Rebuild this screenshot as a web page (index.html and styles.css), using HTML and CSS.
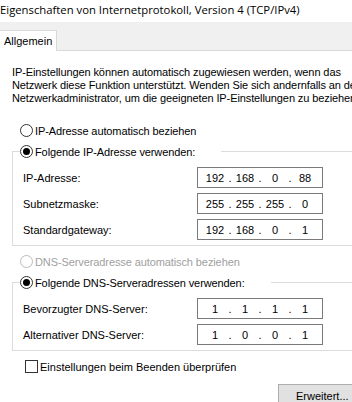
FILE: index.html
```html
<!DOCTYPE html>
<html lang="de">
<head>
  <meta charset="UTF-8" />
  <title>Eigenschaften von Internetprotokoll, Version 4 (TCP/IPv4)</title>
  <link rel="stylesheet" href="styles.css">
</head>
<body>
  <div class="titel">Eigenschaften von Internetprotokoll, Version 4 (TCP/IPv4)</div>

  <div class="reiter">
    <div class="reiter-aktiv">Allgemein</div>
  </div>

  <main class="seite">
    <p class="hinweis">
      IP-Einstellungen können automatisch zugewiesen werden, wenn das<br>
      Netzwerk diese Funktion unterstützt. Wenden Sie sich andernfalls an den<br>
      Netzwerkadministrator, um die geeigneten IP-Einstellungen zu beziehen.
    </p>

    <!-- IP-Adresse -->
    <label class="option"><input type="radio" name="ip" /> IP-Adresse automatisch beziehen</label>
    <fieldset class="gruppe">
      <legend><label class="option"><input type="radio" name="ip" checked /> Folgende IP-Adresse verwenden:</label></legend>
      <div class="zeile">
        <span>IP-Adresse:</span>
        <div class="ipfeld"><span>192</span><i>.</i><span>168</span><i>.</i><span>0</span><i>.</i><span>88</span></div>
      </div>
      <div class="zeile">
        <span>Subnetzmaske:</span>
        <div class="ipfeld"><span>255</span><i>.</i><span>255</span><i>.</i><span>255</span><i>.</i><span>0</span></div>
      </div>
      <div class="zeile">
        <span>Standardgateway:</span>
        <div class="ipfeld"><span>192</span><i>.</i><span>168</span><i>.</i><span>0</span><i>.</i><span>1</span></div>
      </div>
    </fieldset>

    <!-- DNS -->
    <label class="option inaktiv"><input type="radio" name="dns" disabled /> DNS-Serveradresse automatisch beziehen</label>
    <fieldset class="gruppe">
      <legend><label class="option"><input type="radio" name="dns" checked /> Folgende DNS-Serveradressen verwenden:</label></legend>
      <div class="zeile">
        <span>Bevorzugter DNS-Server:</span>
        <div class="ipfeld"><span>1</span><i>.</i><span>1</span><i>.</i><span>1</span><i>.</i><span>1</span></div>
      </div>
      <div class="zeile">
        <span>Alternativer DNS-Server:</span>
        <div class="ipfeld"><span>1</span><i>.</i><span>0</span><i>.</i><span>0</span><i>.</i><span>1</span></div>
      </div>
    </fieldset>

    <label class="pruefen"><input type="checkbox" /> Einstellungen beim Beenden überprüfen</label>

    <div class="aktionen">
      <button type="button">Erweitert...</button>
    </div>
  </main>
</body>
</html>
```

FILE: styles.css
```css
body {
  font-family: 'Liberation Sans', Arial, sans-serif;
  font-size: 11px;
  color: #000;
  background-color: #fff;
  margin: 0;
  width: 352px;
  height: 402px;
  overflow: hidden;
}
.titel {
  height: 22px;
  line-height: 20px;
  font-family: 'Open Sans', 'Noto Sans', sans-serif;
  font-size: 11.3px;
  white-space: nowrap;
}
.reiter {
  height: 28px;
  background-color: #f0f0f0;
  border-bottom: 1px solid #d9d9d9;
  display: flex;
  align-items: flex-end;
}
.reiter-aktiv {
  width: 52px;
  height: 20px;
  line-height: 20px;
  padding-left: 4px;
  background: #fff;
  border-top: 1px solid #d9d9d9;
  border-right: 1px solid #d9d9d9;
  margin-bottom: -1px;
}
.seite {
  padding-left: 12px;
  white-space: nowrap;
}
.hinweis {
  margin: 15px 0 0;
  line-height: 13px;
  letter-spacing: -0.1px;
}

/* Optionsfelder */
.option {
  display: flex;
  align-items: center;
  gap: 2px;
  height: 21px;
  padding-left: 8px;
  letter-spacing: -0.1px;
}
.hinweis + .option {
  margin-top: 15px;
}
.option.inaktiv {
  color: #a0a0a0;
  margin-top: 5px;
}
legend .option {
  padding-left: 0;
  padding-right: 26px;
}
input[type="radio"] {
  appearance: none;
  margin: 0;
  width: 13px;
  height: 13px;
  border: 1px solid #333;
  border-radius: 50%;
  box-sizing: border-box;
  display: grid;
  place-content: center;
  background: #fff;
}
input[type="radio"]:checked::before {
  content: '';
  width: 7px;
  height: 7px;
  border-radius: 50%;
  background: #000;
}
input[type="radio"]:disabled {
  border-color: #bcbcbc;
}

/* Gruppenrahmen */
.gruppe {
  margin: 0 -20px 0 0;
  padding: 0 0 5px;
  border: 1px solid #dcdcdc;
  border-right: none;
}
.gruppe legend {
  margin-left: 7px;
  padding: 0;
}
.zeile {
  display: flex;
  align-items: center;
  justify-content: space-between;
  width: 300px;
  height: 21px;
  padding-left: 10px;
  margin-top: 5px;
}
.ipfeld {
  display: flex;
  box-sizing: border-box;
  width: 126px;
  height: 21px;
  padding-left: 5px;
  border: 1px solid #7a7a7a;
  align-items: center;
}
.ipfeld span {
  width: 24px;
  text-align: center;
}
.ipfeld i {
  font-style: normal;
  width: 6px;
  text-align: center;
}

/* Kontrollkästchen */
.pruefen {
  display: flex;
  align-items: center;
  gap: 2px;
  height: 21px;
  margin: 5px 0 0 13px;
}
input[type="checkbox"] {
  appearance: none;
  margin: 0;
  width: 13px;
  height: 13px;
  border: 1px solid #333;
  box-sizing: border-box;
  background: #fff;
}

.aktionen {
  display: flex;
  justify-content: flex-end;
  margin: 7px -10px 0 0;
}
.aktionen button {
  font: inherit;
  width: 84px;
  height: 23px;
  text-align: left;
  padding-left: 17px;
  background-color: #e1e1e1;
  border: 1px solid #adadad;
}
```
